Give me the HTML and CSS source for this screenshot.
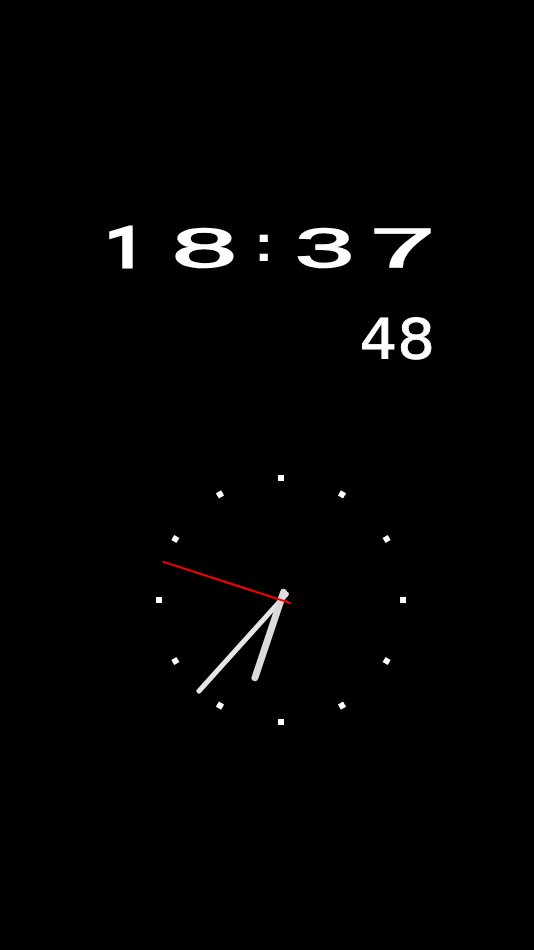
FILE: index.html
```html
<!DOCTYPE html>
<html>
<head>
<meta charset="utf-8">
<link rel="stylesheet" href="styles.css">
</head>
<body>
<div class="screen">
  <div class="time"><span class="cell c1"><span class="g one">1</span></span><span class="cell c2"><span class="g">8</span></span><span class="cell c3"><span class="colon">:</span></span><span class="cell c4"><span class="g three">3</span></span><span class="cell c5"><span class="g">7</span></span></div>
  <div class="secs"><span class="secs-text">48</span></div>
  <div class="dial-wrap">
    <svg class="dial" width="260" height="260" viewBox="0 0 260 260">
      <g fill="#fff">
        <rect x="127" y="5" width="6" height="6" transform="rotate(0 130 130)"/>
        <rect x="127" y="5" width="6" height="6" transform="rotate(30 130 130)"/>
        <rect x="127" y="5" width="6" height="6" transform="rotate(60 130 130)"/>
        <rect x="127" y="5" width="6" height="6" transform="rotate(90 130 130)"/>
        <rect x="127" y="5" width="6" height="6" transform="rotate(120 130 130)"/>
        <rect x="127" y="5" width="6" height="6" transform="rotate(150 130 130)"/>
        <rect x="127" y="5" width="6" height="6" transform="rotate(180 130 130)"/>
        <rect x="127" y="5" width="6" height="6" transform="rotate(210 130 130)"/>
        <rect x="127" y="5" width="6" height="6" transform="rotate(240 130 130)"/>
        <rect x="127" y="5" width="6" height="6" transform="rotate(270 130 130)"/>
        <rect x="127" y="5" width="6" height="6" transform="rotate(300 130 130)"/>
        <rect x="127" y="5" width="6" height="6" transform="rotate(330 130 130)"/>
      </g>
      <line x1="130" y1="138" x2="130" y2="7.5" stroke="#e6e6e6" stroke-width="5" stroke-linecap="round" transform="rotate(222 130 130)"/>
      <line x1="130" y1="138" x2="130" y2="48" stroke="#dcdcdc" stroke-width="7" stroke-linecap="round" transform="rotate(198.5 130 130)"/>
      <line x1="130" y1="140.7" x2="130" y2="5.7" stroke="#ff0000" stroke-width="2" transform="rotate(288 130 130)"/>
    </svg>
  </div>
</div>
</body>
</html>
```
FILE: styles.css
```css
html, body {
  margin: 0;
  padding: 0;
  background: #000;
}
.screen {
  width: 534px;
  height: 950px;
  padding-top: 218px;
  box-sizing: border-box;
  color: #fff;
  overflow: hidden;
}
.time {
  padding-left: 90px;
  height: 60px;
  white-space: nowrap;
  font-family: "Liberation Sans", Arial, sans-serif;
  font-size: 56px;
  line-height: 60px;
}
.cell {
  display: inline-block;
  text-align: center;
  vertical-align: top;
  height: 60px;
}
.c1 { width: 71px; }
.c2 { width: 87px; }
.c3 { width: 32px; }
.c4 { width: 89px; }
.c5 { width: 68px; }
.g {
  display: inline-block;
  -webkit-text-stroke: 1.4px #fff;
  transform: scaleX(2.1);
}
.one {
  font-family: Roboto, "Liberation Sans", sans-serif;
  font-size: 55px;
  -webkit-text-stroke: 3px #fff;
  transform: scaleX(1.3);
}
.three {
  transform: scaleX(1.9);
}
.colon {
  display: inline-block;
  font-weight: bold;
  font-size: 52px;
  line-height: 52px;
  transform: translateY(-6px) scaleX(1.1);
}
.secs {
  margin-top: 34px;
  padding-right: 99px;
  text-align: right;
  font-family: "DejaVu Sans", sans-serif;
  font-size: 55px;
  line-height: 55px;
  height: 55px;
}
.secs-text {
  display: inline-block;
  -webkit-text-stroke: 0.8px #fff;
  transform: scaleX(1.08);
  transform-origin: right center;
}
.dial-wrap {
  margin-top: 103px;
  padding-left: 151px;
  height: 260px;
}
.dial {
  display: block;
}
```
